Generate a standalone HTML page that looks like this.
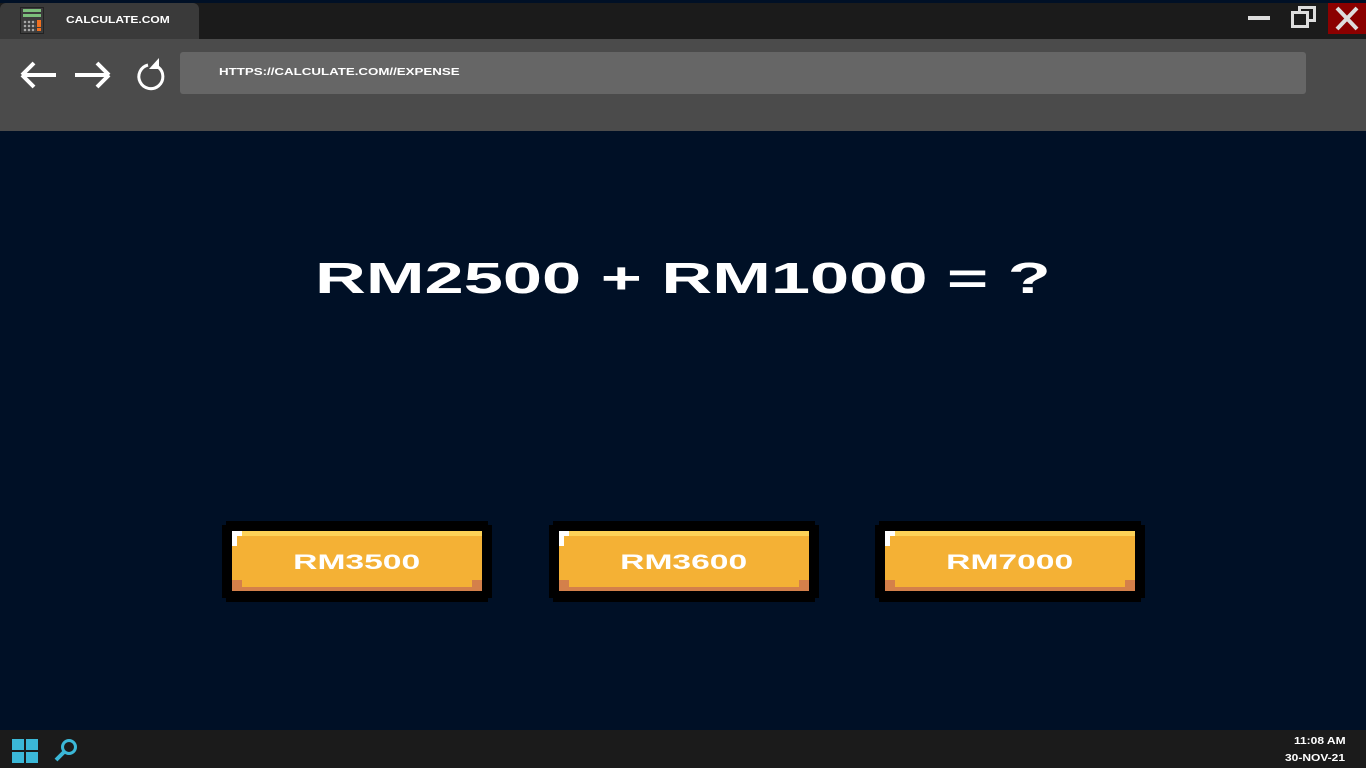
<!DOCTYPE html>
<html><head><meta charset="utf-8"><style>
*{margin:0;padding:0;box-sizing:border-box}
body{width:1366px;height:768px;overflow:hidden;background:#001026;font-family:"Liberation Sans",sans-serif;position:relative;color:#fff}
.abs{position:absolute}
.px{font-weight:bold;white-space:nowrap;display:inline-block;transform-origin:center}
</style></head><body>
<div class="abs" style="left:0;top:0;width:1366px;height:3px;background:#001026"></div>
<div class="abs" style="left:0;top:3px;width:1366px;height:36px;background:#1b1b1b"></div>
<div class="abs" style="left:0;top:3px;width:199px;height:36px;background:#3a3a3a;border-radius:6px 6px 0 0"></div>
<div class="abs" style="left:20px;top:7px;width:24px;height:27px;background:#3c3c3c;border:1px solid #222">
 <div class="abs" style="left:2px;top:1px;width:18px;height:3px;background:#7cc07c"></div>
 <div class="abs" style="left:2px;top:6px;width:18px;height:3px;background:#7cc07c"></div>
 <div class="abs" style="left:2px;top:12px;width:13px;height:12px;background:radial-gradient(circle,#aaa 1px,transparent 1.5px) 0 0/4px 4px"></div>
 <div class="abs" style="left:16px;top:12px;width:4px;height:7px;background:#f07020"></div>
 <div class="abs" style="left:16px;top:20px;width:4px;height:3px;background:#f07020"></div>
</div>
<div class="abs px" style="left:66px;top:15px;font-size:10px;transform:scaleX(1.2);transform-origin:left">CALCULATE.COM</div>
<div class="abs" style="left:1248px;top:16px;width:22px;height:4px;background:#ddd"></div>
<div class="abs" style="left:1298px;top:6px;width:18px;height:16px;border:3px solid #ddd"></div>
<div class="abs" style="left:1291px;top:11px;width:18px;height:17px;border:3px solid #ddd;background:#1b1b1b"></div>
<div class="abs" style="left:1328px;top:3px;width:38px;height:31px;background:#8b0000"></div>
<svg class="abs" style="left:1328px;top:3px" width="38" height="31"><path d="M9 5L29 26M29 5L9 26" stroke="#ddd" stroke-width="4"/></svg>
<div class="abs" style="left:0;top:39px;width:1366px;height:92px;background:#4b4b4b"></div>
<svg class="abs" style="left:18px;top:58px" width="150" height="34">
 <path d="M4 17H38M4 17L16 5M4 17L16 29" stroke="#fff" stroke-width="4" fill="none"/>
 <path d="M57 17H91M91 17L79 5M91 17L79 29" stroke="#fff" stroke-width="4" fill="none"/>
 <path d="M140 9A12 12 0 1 1 130 7" stroke="#fff" stroke-width="3" fill="none"/>
 <path d="M141 0L141 11L131 11Z" fill="#fff"/>
</svg>
<div class="abs" style="left:180px;top:52px;width:1126px;height:42px;background:#666;border-radius:3px"></div>
<div class="abs px" style="left:219px;top:67px;font-size:10px;transform:scaleX(1.33);transform-origin:left">HTTPS://CALCULATE.COM//EXPENSE</div>
<div class="abs" style="left:0;top:254px;width:1366px;text-align:center">
 <span class="px" style="font-size:44px;transform:scaleX(1.6)">RM2500 + RM1000 = ?</span>
</div>
<div class="abs" style="left:222px;top:521px;width:270px;height:81px">
 <div class="abs" style="left:0;top:4px;width:270px;height:73px;background:#000"></div>
 <div class="abs" style="left:4px;top:0;width:262px;height:81px;background:#000"></div>
 <div class="abs" style="left:10px;top:10px;width:250px;height:60px;background:#f4b135"></div>
 <div class="abs" style="left:20px;top:10px;width:240px;height:5px;background:#fdd257"></div>
 <div class="abs" style="left:10px;top:59px;width:250px;height:11px;background:#d4804a"></div>
 <div class="abs" style="left:20px;top:59px;width:230px;height:7px;background:#f4b135"></div>
 <div class="abs" style="left:10px;top:10px;width:10px;height:5px;background:#fff"></div>
 <div class="abs" style="left:10px;top:15px;width:5px;height:10px;background:#fff"></div>
 <div class="abs" style="left:0;top:30px;width:270px;text-align:center"><span class="px" style="font-size:21px;transform:scaleX(1.6)">RM3500</span></div>
</div>
<div class="abs" style="left:549px;top:521px;width:270px;height:81px">
 <div class="abs" style="left:0;top:4px;width:270px;height:73px;background:#000"></div>
 <div class="abs" style="left:4px;top:0;width:262px;height:81px;background:#000"></div>
 <div class="abs" style="left:10px;top:10px;width:250px;height:60px;background:#f4b135"></div>
 <div class="abs" style="left:20px;top:10px;width:240px;height:5px;background:#fdd257"></div>
 <div class="abs" style="left:10px;top:59px;width:250px;height:11px;background:#d4804a"></div>
 <div class="abs" style="left:20px;top:59px;width:230px;height:7px;background:#f4b135"></div>
 <div class="abs" style="left:10px;top:10px;width:10px;height:5px;background:#fff"></div>
 <div class="abs" style="left:10px;top:15px;width:5px;height:10px;background:#fff"></div>
 <div class="abs" style="left:0;top:30px;width:270px;text-align:center"><span class="px" style="font-size:21px;transform:scaleX(1.6)">RM3600</span></div>
</div>
<div class="abs" style="left:875px;top:521px;width:270px;height:81px">
 <div class="abs" style="left:0;top:4px;width:270px;height:73px;background:#000"></div>
 <div class="abs" style="left:4px;top:0;width:262px;height:81px;background:#000"></div>
 <div class="abs" style="left:10px;top:10px;width:250px;height:60px;background:#f4b135"></div>
 <div class="abs" style="left:20px;top:10px;width:240px;height:5px;background:#fdd257"></div>
 <div class="abs" style="left:10px;top:59px;width:250px;height:11px;background:#d4804a"></div>
 <div class="abs" style="left:20px;top:59px;width:230px;height:7px;background:#f4b135"></div>
 <div class="abs" style="left:10px;top:10px;width:10px;height:5px;background:#fff"></div>
 <div class="abs" style="left:10px;top:15px;width:5px;height:10px;background:#fff"></div>
 <div class="abs" style="left:0;top:30px;width:270px;text-align:center"><span class="px" style="font-size:21px;transform:scaleX(1.6)">RM7000</span></div>
</div>
<div class="abs" style="left:0;top:730px;width:1366px;height:38px;background:#1b1b1b"></div>
<div class="abs" style="left:12px;top:739px;width:12px;height:11px;background:#3bb8d8"></div>
<div class="abs" style="left:26px;top:739px;width:12px;height:11px;background:#3bb8d8"></div>
<div class="abs" style="left:12px;top:752px;width:12px;height:11px;background:#3bb8d8"></div>
<div class="abs" style="left:26px;top:752px;width:12px;height:11px;background:#3bb8d8"></div>
<svg class="abs" style="left:53px;top:738px" width="26" height="26"><circle cx="16" cy="9" r="6.5" stroke="#3bb8d8" stroke-width="3" fill="none"/><path d="M11 14L3 22" stroke="#3bb8d8" stroke-width="4"/></svg>
<div class="abs px" style="left:1294px;top:736px;font-size:10px;transform:scaleX(1.2);transform-origin:left">11:08 AM</div>
<div class="abs px" style="left:1285px;top:753px;font-size:10px;transform:scaleX(1.2);transform-origin:left">30-NOV-21</div>
</body></html>
